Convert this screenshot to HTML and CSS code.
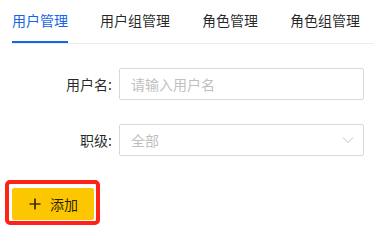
FILE: index.html
```html
<!DOCTYPE html>
<html lang="zh-CN">
<head>
<meta charset="utf-8">
<title>用户管理</title>
<link rel="stylesheet" href="styles.css">
</head>
<body>
<div class="tabs">
  <div class="tab active">用户管理</div>
  <div class="tab">用户组管理</div>
  <div class="tab">角色管理</div>
  <div class="tab">角色组管理</div>
</div>
<form class="form">
  <div class="row">
    <label class="label">用户名:</label>
    <input class="control" type="text" placeholder="请输入用户名">
  </div>
  <div class="row">
    <label class="label">职级:</label>
    <div class="control select">
      <span class="placeholder">全部</span>
      <svg class="arrow" width="12" height="8" viewBox="0 0 12 8"><polyline points="1,1.5 6,6.5 11,1.5" fill="none" stroke="#bfbfbf" stroke-width="1"/></svg>
    </div>
  </div>
  <div class="actions">
    <div class="highlight">
      <button type="button" class="btn">
        <svg class="plus" width="14" height="14" viewBox="0 0 14 14"><path d="M7 1.5V12.5M1.5 7H12.5" stroke="#3a3000" stroke-width="1.7" fill="none"/></svg>
        <span>添加</span>
      </button>
    </div>
  </div>
</form>
</body>
</html>
```
FILE: styles.css
```css
* { box-sizing: border-box; }
body {
  margin: 0;
  background: #fff;
  font-family: "Noto Sans CJK SC", "Noto Sans", sans-serif;
  font-size: 14px;
  color: rgba(0, 0, 0, 0.85);
}
.tabs {
  display: flex;
  margin-left: 12px;
  border-bottom: 1px solid #ececec;
}
.tab {
  padding: 9px 0 10px;
  line-height: 22px;
  margin-right: 32px;
  border-bottom: 2px solid transparent;
  white-space: nowrap;
}
.tab.active {
  color: #1664e8;
  border-bottom-color: #1664e8;
}
.form {
  padding: 24px 10px 0 12px;
  margin: 0;
}
.row {
  display: flex;
  align-items: center;
  height: 32px;
  margin-bottom: 24px;
}
.label {
  flex: none;
  width: 107px;
  padding-right: 7px;
  text-align: right;
  line-height: 32px;
  white-space: nowrap;
}
.control {
  flex: 1;
  min-width: 0;
  height: 32px;
  border: 1px solid #d9d9d9;
  border-radius: 2px;
  padding: 0 11px;
  font: inherit;
  font-size: 14px;
  color: rgba(0, 0, 0, 0.85);
  background: #fff;
  outline: none;
}
.control::placeholder { color: #bfbfbf; }
.select {
  display: flex;
  align-items: center;
  justify-content: space-between;
  padding-right: 9px;
}
.placeholder { color: #bfbfbf; }
.arrow { display: block; }
.actions {
  margin-top: 8px;
}
.highlight {
  display: inline-block;
  margin-left: -7px;
  border: 4px solid #ff2216;
  border-radius: 5px;
  padding: 4px 2px 1px 3px;
}
.btn {
  display: flex;
  align-items: center;
  gap: 8px;
  height: 32px;
  padding: 0 15px;
  border: 1px solid #fcc700;
  border-radius: 2px;
  background: #fcc700;
  font: inherit;
  font-size: 14px;
  color: rgba(0, 0, 0, 0.85);
  cursor: pointer;
}
.plus { display: block; }
```
